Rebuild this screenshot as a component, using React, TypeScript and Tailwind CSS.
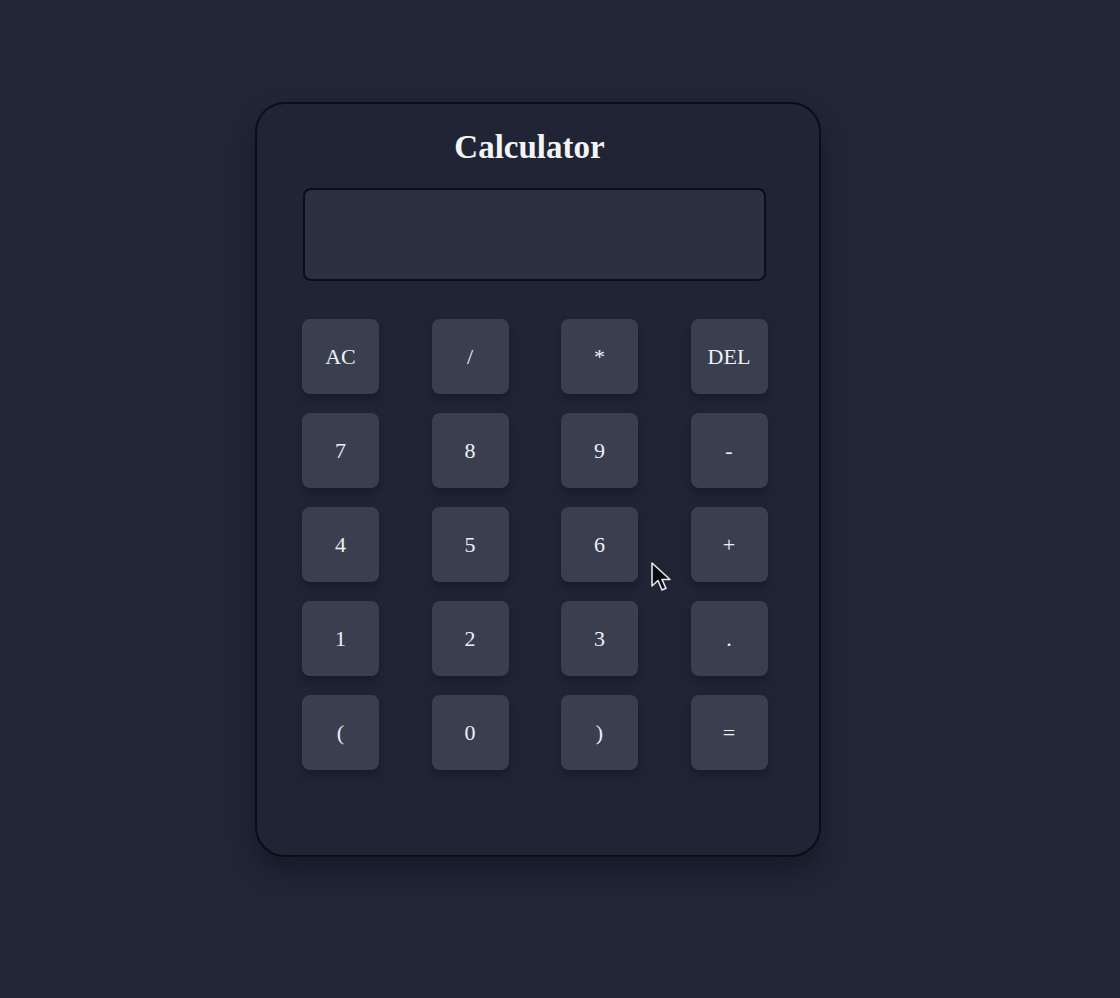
import React from "react";

const keys = ["AC", "/", "*", "DEL", "7", "8", "9", "-", "4", "5", "6", "+", "1", "2", "3", ".", "(", "0", ")", "="];

export default function App() {
  return (
    <div className="relative min-h-[998px] w-full overflow-hidden bg-[#212536] pl-[255px] pt-[102px]" style={{ fontFamily: '"Liberation Serif", "Times New Roman", serif' }}>
      <div className="w-[566px] h-[755px] rounded-[30px] border-2 border-[#0b0e18] bg-[#202435] pl-[46px] pr-[53px] pt-[21px] shadow-[0_14px_24px_rgba(0,0,0,0.3)]">
        <h1 className="pr-[10px] text-center text-[33px] font-bold leading-[44px] text-[#f3f4f6]">Calculator</h1>
        <div className="mt-[19px] h-[93px] w-full rounded-[8px] border-2 border-[#0b0e18] bg-[#2c3142]" />
        <div className="mt-[38px] -ml-[1px] grid w-[466px] grid-cols-4 gap-x-[52px] gap-y-[19px]">
          {keys.map((k) => (
            <button
              key={k}
              className="h-[75px] w-[77px] rounded-[8px] bg-[#3a3f4f] text-[22px] text-[#eef0f4] shadow-[0_6px_10px_rgba(0,0,0,0.25)]"
            >
              {k}
            </button>
          ))}
        </div>
      </div>
      {/* mouse cursor */}
      <svg className="absolute left-[651px] top-[562px]" width="22" height="34" viewBox="0 0 22 34">
        <path d="M1 1 L1 24 L7 18.5 L11 28 L15 26.3 L11 17.5 L19 17.5 Z" fill="#0a0c14" stroke="#e5e7eb" strokeWidth="1.6" strokeLinejoin="round" />
      </svg>
    </div>
  );
}
